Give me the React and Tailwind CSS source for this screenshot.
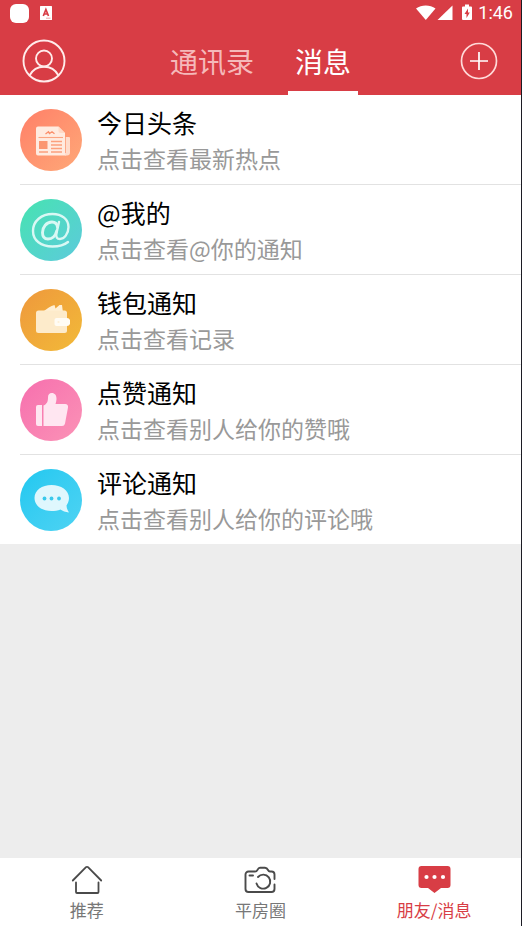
import React, { useState } from 'react';

const NewsIcon = () => (
    <svg viewBox="0 0 62 62" className="w-full h-full" aria-hidden="true">
        <path d="M45 28h4a1 1 0 0 1 1 1v14.500a3 3 0 0 1-3 3h-2z" fill="#ffdccb" />
        <path d="M18 17.500h20.500l6.500 6.500v20.500a2 2 0 0 0 1 2H18a2 2 0 0 1-2-2v-25a2 2 0 0 1 2-2z" fill="#ffebe0" />
        <path d="M38.500 17.500V22a2 2 0 0 0 2 2H45z" fill="#ffd9c6" />
        <path d="M45.500 28v16" stroke="#fd9d78" strokeWidth="0.800" />
        <path d="M25.500 25l3-2.200 1 1.700 2.500-1.700 2.500 2" fill="none" stroke="#fb8f6b" strokeWidth="1.300" />
        <path d="M18.500 28.500H43" stroke="#fca582" strokeWidth="1.100" />
        <rect x="19" y="32" width="8.500" height="8" fill="#fb9670" />
        <path d="M31 32.500h11M31 36h11M31 39.500h11M19 43h9M31 43h11" stroke="#fca07c" strokeWidth="1.300" />
    </svg>
);

const AtIcon = () => (
    <svg viewBox="0 0 62 62" className="w-full h-full" aria-hidden="true" fill="none" stroke="#d9f8f4" strokeLinecap="round">
        <path d="M48 43c-4 3.300-9.500 4.500-15.500 4.500-11.500 0-19.500-6-19.500-15.500C13 22 21.500 15 32.500 15 42 15 48.500 20.500 48.500 28c0 7-4.500 12-8.500 12-3 0-4.300-2-3.600-5.500L39 23" strokeWidth="2.400" />
        <path d="M37.500 28c-.5-3.300-2.500-5-5.500-5-5.500 0-9.500 5-9.500 10.500 0 4 2 6.500 5.500 6.500 4.500 0 7.500-3.500 8.700-8" strokeWidth="2.900" />
    </svg>
);

const WalletIcon = () => (
    <svg viewBox="0 0 62 62" className="w-full h-full" aria-hidden="true">
        <path d="M24 22c3-2.500 6.500-5 10.500-6l1 3.500 4-3.500h2.500l.8 6z" fill="#fff0d6" />
        <rect x="16" y="21.500" width="31" height="22.500" rx="2.500" fill="#fdebcb" />
        <path d="M36.500 29H47a3.500 3.500 0 0 1 3 2v4a3.500 3.500 0 0 1-3 2H36.500a2 2 0 0 1-2-2v-4a2 2 0 0 1 2-2z" fill="#fffcf5" />
        <circle cx="38.500" cy="33" r="1.100" fill="#fef0d8" />
    </svg>
);

const LikeIcon = () => (
    <svg viewBox="0 0 62 62" className="w-full h-full" aria-hidden="true" fill="#ffe6f1">
        <path d="M18 26h4v21h-4a2 2 0 0 1-2-2V28a2 2 0 0 1 2-2z" />
        <path d="M23.500 26.500c3.500-1.500 4.500-4 4.500-8 0-3 1.300-4.500 3.800-4.500 3 0 4.700 2.300 4.700 5.500 0 2.300-.5 4-1 5.500h9.700c2 0 3.200 1.500 2.800 3.500l-3 16c-.4 1.700-1.500 2.500-3 2.500H23.500z" />
    </svg>
);

const CommentIcon = () => (
    <svg viewBox="0 0 62 62" className="w-full h-full" aria-hidden="true">
        <path d="M31.500 16C41 16 49 21.300 49 29c0 3.200-1.300 5.600-2.500 7.500.2 2.800 1 5 2.500 7-3.500-.3-6.500-1.500-8.500-3-2.700 1-5.700 1.500-9 1.500C22 42 14.500 36.700 14.500 29S22 16 31.500 16z" fill="#dff7fd" />
        <g fill="#39c9ec">
            <circle cx="24.500" cy="29.500" r="1.900" />
            <circle cx="31.500" cy="29.500" r="1.900" />
            <circle cx="39" cy="29.500" r="1.900" />
        </g>
    </svg>
);

const messages = [
    { id: 'news', title: '今日头条', desc: '点击查看最新热点', bg: 'bg-linear-to-br from-[#ff7f68] to-[#fea878]', Icon: NewsIcon },
    { id: 'at', title: '@我的', desc: '点击查看@你的通知', bg: 'bg-linear-to-br from-[#46e3b0] to-[#5ccadb]', Icon: AtIcon },
    { id: 'wallet', title: '钱包通知', desc: '点击查看记录', bg: 'bg-linear-to-br from-[#ee983c] to-[#f2ba38]', Icon: WalletIcon },
    { id: 'like', title: '点赞通知', desc: '点击查看别人给你的赞哦', bg: 'bg-linear-to-br from-[#f66fae] to-[#fb92b6]', Icon: LikeIcon },
    { id: 'comment', title: '评论通知', desc: '点击查看别人给你的评论哦', bg: 'bg-linear-to-br from-[#1fc8f0] to-[#4dd3f3]', Icon: CommentIcon },
];

const HomeIcon = () => (
    <svg viewBox="0 0 32 30" className="w-8 h-[30px]" aria-hidden="true" fill="none" stroke="#4a4a4a" strokeWidth="1.800" strokeLinecap="round" strokeLinejoin="round">
        <path d="M1.800 15.500L15 2.200a1.400 1.400 0 0 1 2 0L30.200 15.500" />
        <path d="M5 17.500V27a1 1 0 0 0 1 1h20.500a1 1 0 0 0 1-1v-9.500" />
    </svg>
);

const CameraIcon = () => (
    <svg viewBox="0 0 32 30" className="w-8 h-[30px]" aria-hidden="true" fill="none" stroke="#4a4a4a" strokeWidth="1.900" strokeLinecap="round" strokeLinejoin="round">
        <path d="M30.500 14V9.500A3 3 0 0 0 27.500 6.500H26c-1 0-1.500-.5-2-1.500S22.500 2.800 21 2.800h-5c-1.500 0-2 1-2.500 2S12 6.500 11 6.500H4.500a3 3 0 0 0-3 3v14.500a3 3 0 0 0 3 3h23a3 3 0 0 0 3-3v-4.500" />
        <path d="M5.500 10.500h3.500" />
        <path d="M14 12a7 7 0 1 1-1.500 6.500" />
    </svg>
);

const ChatIcon = () => (
    <svg viewBox="0 0 34 30" className="w-[34px] h-[30px]" aria-hidden="true">
        <path d="M4.500 1h26a3 3 0 0 1 3 3v16a3 3 0 0 1-3 3H24l-6.500 5L11 23H4.500a3 3 0 0 1-3-3V4a3 3 0 0 1 3-3z" fill="#d83d45" />
        <g fill="#fff">
            <circle cx="9.500" cy="12" r="2.100" />
            <circle cx="17.500" cy="12" r="2.100" />
            <circle cx="26" cy="12" r="2.100" />
        </g>
    </svg>
);

const navItems = [
    { id: 'recommend', label: '推荐', Icon: HomeIcon },
    { id: 'circle', label: '平房圈', Icon: CameraIcon },
    { id: 'friends', label: '朋友/消息', Icon: ChatIcon },
];

const StatusBar = () => (
    <div className="flex items-center justify-between h-[26px] pl-[10px] pr-2">
        <div className="flex items-center gap-[11px]">
            <span className="w-[19px] h-[19px] rounded-md bg-white"></span>
            <svg viewBox="0 0 12 14" className="w-3 h-[14px]" aria-hidden="true">
                <rect width="12" height="14" rx="0.500" fill="#fff" />
                <path d="M3.300 10L5.900 3.500 8.500 10M4.300 8h3.200" fill="none" stroke="#d83d45" strokeWidth="1.700" />
                <path d="M6 12.200h4.500" stroke="#e88a8f" strokeWidth="0.800" />
            </svg>
        </div>
        <div className="flex items-center">
            <svg viewBox="0 0 58 18" className="w-[58px] h-[18px]" aria-hidden="true" fill="#fff">
                <path d="M0 4.500C5.500.5 14 .5 19.500 4.500L9.800 16z" />
                <path d="M36.500 1.500V16H21.500z" />
                <path d="M49 0.500h4V2.500h2a1 1 0 0 1 1 1V15a1 1 0 0 1-1 1h-8a1 1 0 0 1-1-1V3.500a1 1 0 0 1 1-1h2z" />
                <path d="M52 4.500l-3.500 5.500h2v4l3.300-5.500h-1.800z" fill="#d83d45" />
            </svg>
            <span className="ml-1 text-[18px] leading-[26px] text-white font-['Roboto',sans-serif]">1:46</span>
        </div>
    </div>
);

const App = () => {
    const [activeTab, setActiveTab] = useState('messages');
    const [activeNav, setActiveNav] = useState('friends');

    return (
        <div className="flex flex-col min-h-screen bg-[#ededed] border-r border-[#1c1c24] font-['Noto_Sans_CJK_SC',sans-serif]">
            <header className="bg-[#d83d45]">
                <StatusBar />
                <div className="flex items-center justify-between h-[69px] px-[22px]">
                    <button type="button" aria-label="个人中心">
                        <svg viewBox="0 0 44 44" className="w-11 h-11" aria-hidden="true" fill="none" stroke="#ffeceb" strokeWidth="1.900">
                            <circle cx="22" cy="22" r="20.500" />
                            <circle cx="22" cy="19.500" r="8" />
                            <path d="M7.500 36.500C10.500 31 16 27.800 22 27.800S33.500 31 36.500 36.500" />
                        </svg>
                    </button>
                    <div className="flex self-stretch gap-[27px]" role="tablist">
                        <button
                            type="button"
                            role="tab"
                            aria-selected={activeTab === 'contacts'}
                            onClick={() => setActiveTab('contacts')}
                            className={`px-[7px] pt-1 text-[28px] leading-[40px] border-b-4 ${activeTab === 'contacts'
                                ? 'text-white border-white'
                                : 'text-[#f5b9ba] border-transparent'
                                }`}
                        >
                            通讯录
                        </button>
                        <button
                            type="button"
                            role="tab"
                            aria-selected={activeTab === 'messages'}
                            onClick={() => setActiveTab('messages')}
                            className={`px-[7px] pt-1 text-[28px] leading-[40px] border-b-4 ${activeTab === 'messages'
                                ? 'text-white border-white'
                                : 'text-[#f5b9ba] border-transparent'
                                }`}
                        >
                            消息
                        </button>
                    </div>
                    <button type="button" aria-label="添加" className="w-11 flex justify-end">
                        <svg viewBox="0 0 40 40" className="w-10 h-10" aria-hidden="true" fill="none" stroke="#ffd9d8" strokeWidth="1.700">
                            <circle cx="20" cy="20" r="17.500" />
                            <path d="M20 11v18M11 20h18" stroke="#fff" />
                        </svg>
                    </button>
                </div>
            </header>

            <main className="flex-1">
                <ul className="bg-white pl-5">
                    {messages.map(({ id, title, desc, bg, Icon }) => (
                        <li key={id} className="border-b border-[#e2e2e2] last:border-b-0">
                            <button type="button" className="flex items-center gap-[15px] w-full h-[89px] text-left">
                                <span className={`w-[62px] h-[62px] rounded-full shrink-0 ${bg}`}>
                                    <Icon />
                                </span>
                                <span className="flex flex-col">
                                    <span className="text-[25px] leading-9 text-black">{title}</span>
                                    <span className="text-[23px] leading-9 text-[#999999]">{desc}</span>
                                </span>
                            </button>
                        </li>
                    ))}
                </ul>
            </main>

            <nav className="grid grid-cols-3 h-[68px] bg-white">
                {navItems.map(({ id, label, Icon }) => (
                    <button
                        key={id}
                        type="button"
                        onClick={() => setActiveNav(id)}
                        className={`flex flex-col items-center gap-[3px] pt-[7px] text-[17px] leading-6 ${activeNav === id ? 'text-[#d83d45]' : 'text-[#777777]'}`}
                    >
                        <Icon />
                        {label}
                    </button>
                ))}
            </nav>
        </div>
    );
};

export default App;
